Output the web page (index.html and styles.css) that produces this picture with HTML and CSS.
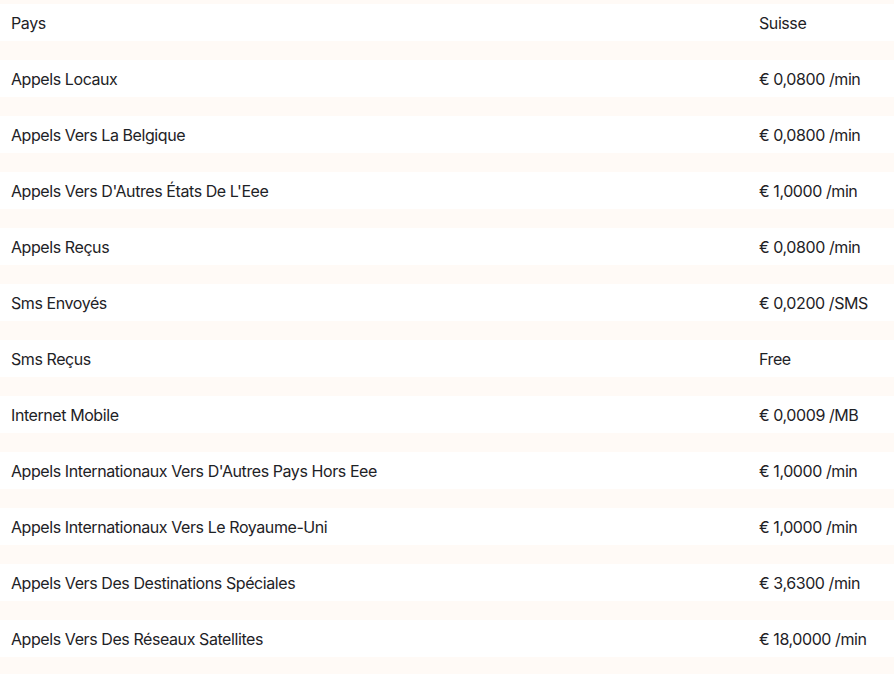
FILE: index.html
```html
<!DOCTYPE html>
<html lang="fr">
<head>
<meta charset="utf-8">
<title>Tarifs</title>
<link rel="stylesheet" href="styles.css">
</head>
<body>
<div class="rates">
  <div class="row"><div class="label">Pays</div><div class="value">Suisse</div></div>
  <div class="row"><div class="label">Appels Locaux</div><div class="value">€ 0,0800 /min</div></div>
  <div class="row"><div class="label">Appels Vers La Belgique</div><div class="value">€ 0,0800 /min</div></div>
  <div class="row"><div class="label">Appels Vers D'Autres États De L'Eee</div><div class="value">€ 1,0000 /min</div></div>
  <div class="row"><div class="label">Appels Reçus</div><div class="value">€ 0,0800 /min</div></div>
  <div class="row"><div class="label">Sms Envoyés</div><div class="value">€ 0,0200 /SMS</div></div>
  <div class="row"><div class="label">Sms Reçus</div><div class="value">Free</div></div>
  <div class="row"><div class="label">Internet Mobile</div><div class="value">€ 0,0009 /MB</div></div>
  <div class="row"><div class="label">Appels Internationaux Vers D'Autres Pays Hors Eee</div><div class="value">€ 1,0000 /min</div></div>
  <div class="row"><div class="label">Appels Internationaux Vers Le Royaume-Uni</div><div class="value">€ 1,0000 /min</div></div>
  <div class="row"><div class="label">Appels Vers Des Destinations Spéciales</div><div class="value">€ 3,6300 /min</div></div>
  <div class="row"><div class="label">Appels Vers Des Réseaux Satellites</div><div class="value">€ 18,0000 /min</div></div>
</div>
</body>
</html>
```
FILE: styles.css
```css
html, body {
  margin: 0;
  padding: 0;
  background: #fffaf6;
}
body {
  font-family: Inter, "Noto Sans", sans-serif;
  font-size: 16px;
  letter-spacing: -0.42px;
  color: #1e2226;
}
.rates {
  display: flex;
  flex-direction: column;
  gap: 19px;
  padding-top: 4px;
}
.row {
  display: grid;
  grid-template-columns: 748px 1fr;
  height: 37px;
  align-items: center;
  padding-left: 11px;
  background: #ffffff;
}
.label, .value {
  white-space: nowrap;
}
```
